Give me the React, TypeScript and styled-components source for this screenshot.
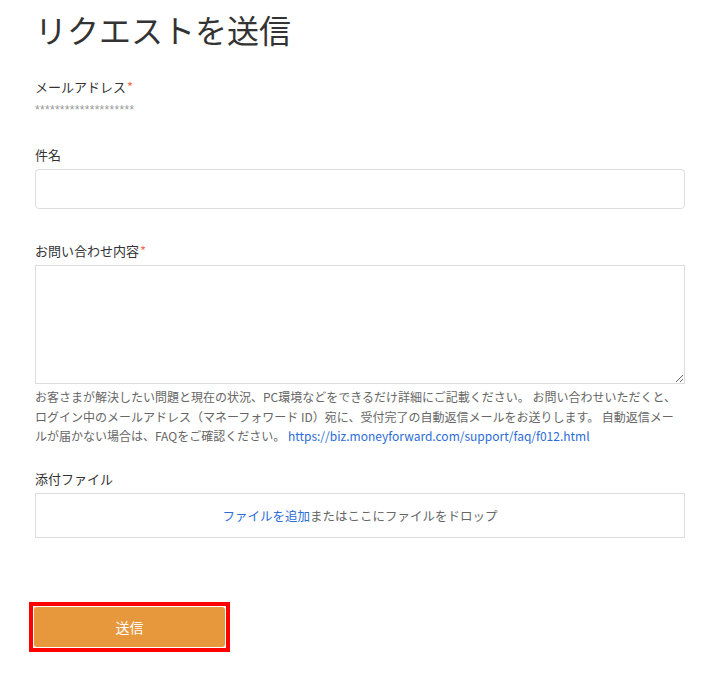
import styled, { createGlobalStyle } from 'styled-components'

const GlobalStyle = createGlobalStyle`
  body {
    margin: 0;
    background: #fff;
    font-family: "Noto Sans CJK JP", "Noto Sans", sans-serif;
    color: #333;
  }
`

const Page = styled.div`
  width: 650px;
  padding: 9px 0 30px 35px;
`
const Title = styled.h1`
  margin: 0 0 28px;
  font-size: 32px;
  line-height: 40px;
  font-weight: 400;
  color: #333;
`
const Field = styled.div<{ $gap?: number }>`
  margin-bottom: ${(p) => p.$gap ?? 30}px;
`
const Label = styled.div`
  font-size: 13px;
  line-height: 20px;
  color: #333;
  margin-bottom: 4px;
`
const Required = styled.span`
  color: #ef6b4f;
  margin-left: 1px;
`
const Masked = styled.div`
  margin-top: 6px;
  font-family: "Liberation Sans", Arial, sans-serif;
  font-size: 12px;
  line-height: 14px;
  color: #999;
  letter-spacing: 0.3px;
`
const Input = styled.input`
  display: block;
  box-sizing: border-box;
  width: 100%;
  height: 40px;
  border: 1px solid #ddd;
  border-radius: 4px;
  padding: 6px 10px;
  font: inherit;
`
const TextArea = styled.textarea`
  display: block;
  box-sizing: border-box;
  width: 100%;
  height: 119px;
  border: 1px solid #ddd;
  border-radius: 0;
  padding: 6px 10px;
  font: inherit;
  resize: vertical;
`
const Help = styled.p`
  margin: 3px 0 0;
  font-size: 12px;
  line-height: 19.5px;
  color: #666;
  a {
    color: #2b6cd8;
    text-decoration: none;
  }
`
const DropZone = styled.div`
  box-sizing: border-box;
  height: 45px;
  border: 1px solid #ddd;
  display: flex;
  align-items: center;
  justify-content: center;
  font-size: 12.5px;
  color: #666;
  a {
    color: #2b6cd8;
    text-decoration: none;
  }
`
const Highlight = styled.div`
  display: inline-block;
  vertical-align: top;
  margin: 34px 0 0 -6px;
  border: 4px solid #ff0000;
  padding: 1px;
  background: #fff;
`
const SubmitButton = styled.button`
  display: block;
  width: 191px;
  height: 40px;
  border: none;
  border-radius: 3px;
  background: #e8983c;
  color: #fff;
  font-family: inherit;
  font-size: 14px;
  cursor: pointer;
`

export default function App() {
  return (
    <>
      <GlobalStyle />
      <Page>
        <Title>リクエストを送信</Title>
        <Field $gap={28}>
          <Label>
            メールアドレス<Required>*</Required>
          </Label>
          <Masked>********************</Masked>
        </Field>
        <Field $gap={32}>
          <Label>件名</Label>
          <Input type="text" />
        </Field>
        <Field $gap={23}>
          <Label>
            お問い合わせ内容<Required>*</Required>
          </Label>
          <TextArea />
          <Help>
            お客さまが解決したい問題と現在の状況、PC環境などをできるだけ詳細にご記載ください。 お問い合わせいただくと、ログイン中のメールアドレス（マネーフォワード ID）宛に、受付完了の自動返信メールをお送りします。 自動返信メールが届かない場合は、FAQをご確認ください。{' '}
            <a href="#">https://biz.moneyforward.com/support/faq/f012.html</a>
          </Help>
        </Field>
        <Field>
          <Label>添付ファイル</Label>
          <DropZone>
            <a href="#">ファイルを追加</a>またはここにファイルをドロップ
          </DropZone>
        </Field>
        <Highlight>
          <SubmitButton type="button">送信</SubmitButton>
        </Highlight>
      </Page>
    </>
  )
}
